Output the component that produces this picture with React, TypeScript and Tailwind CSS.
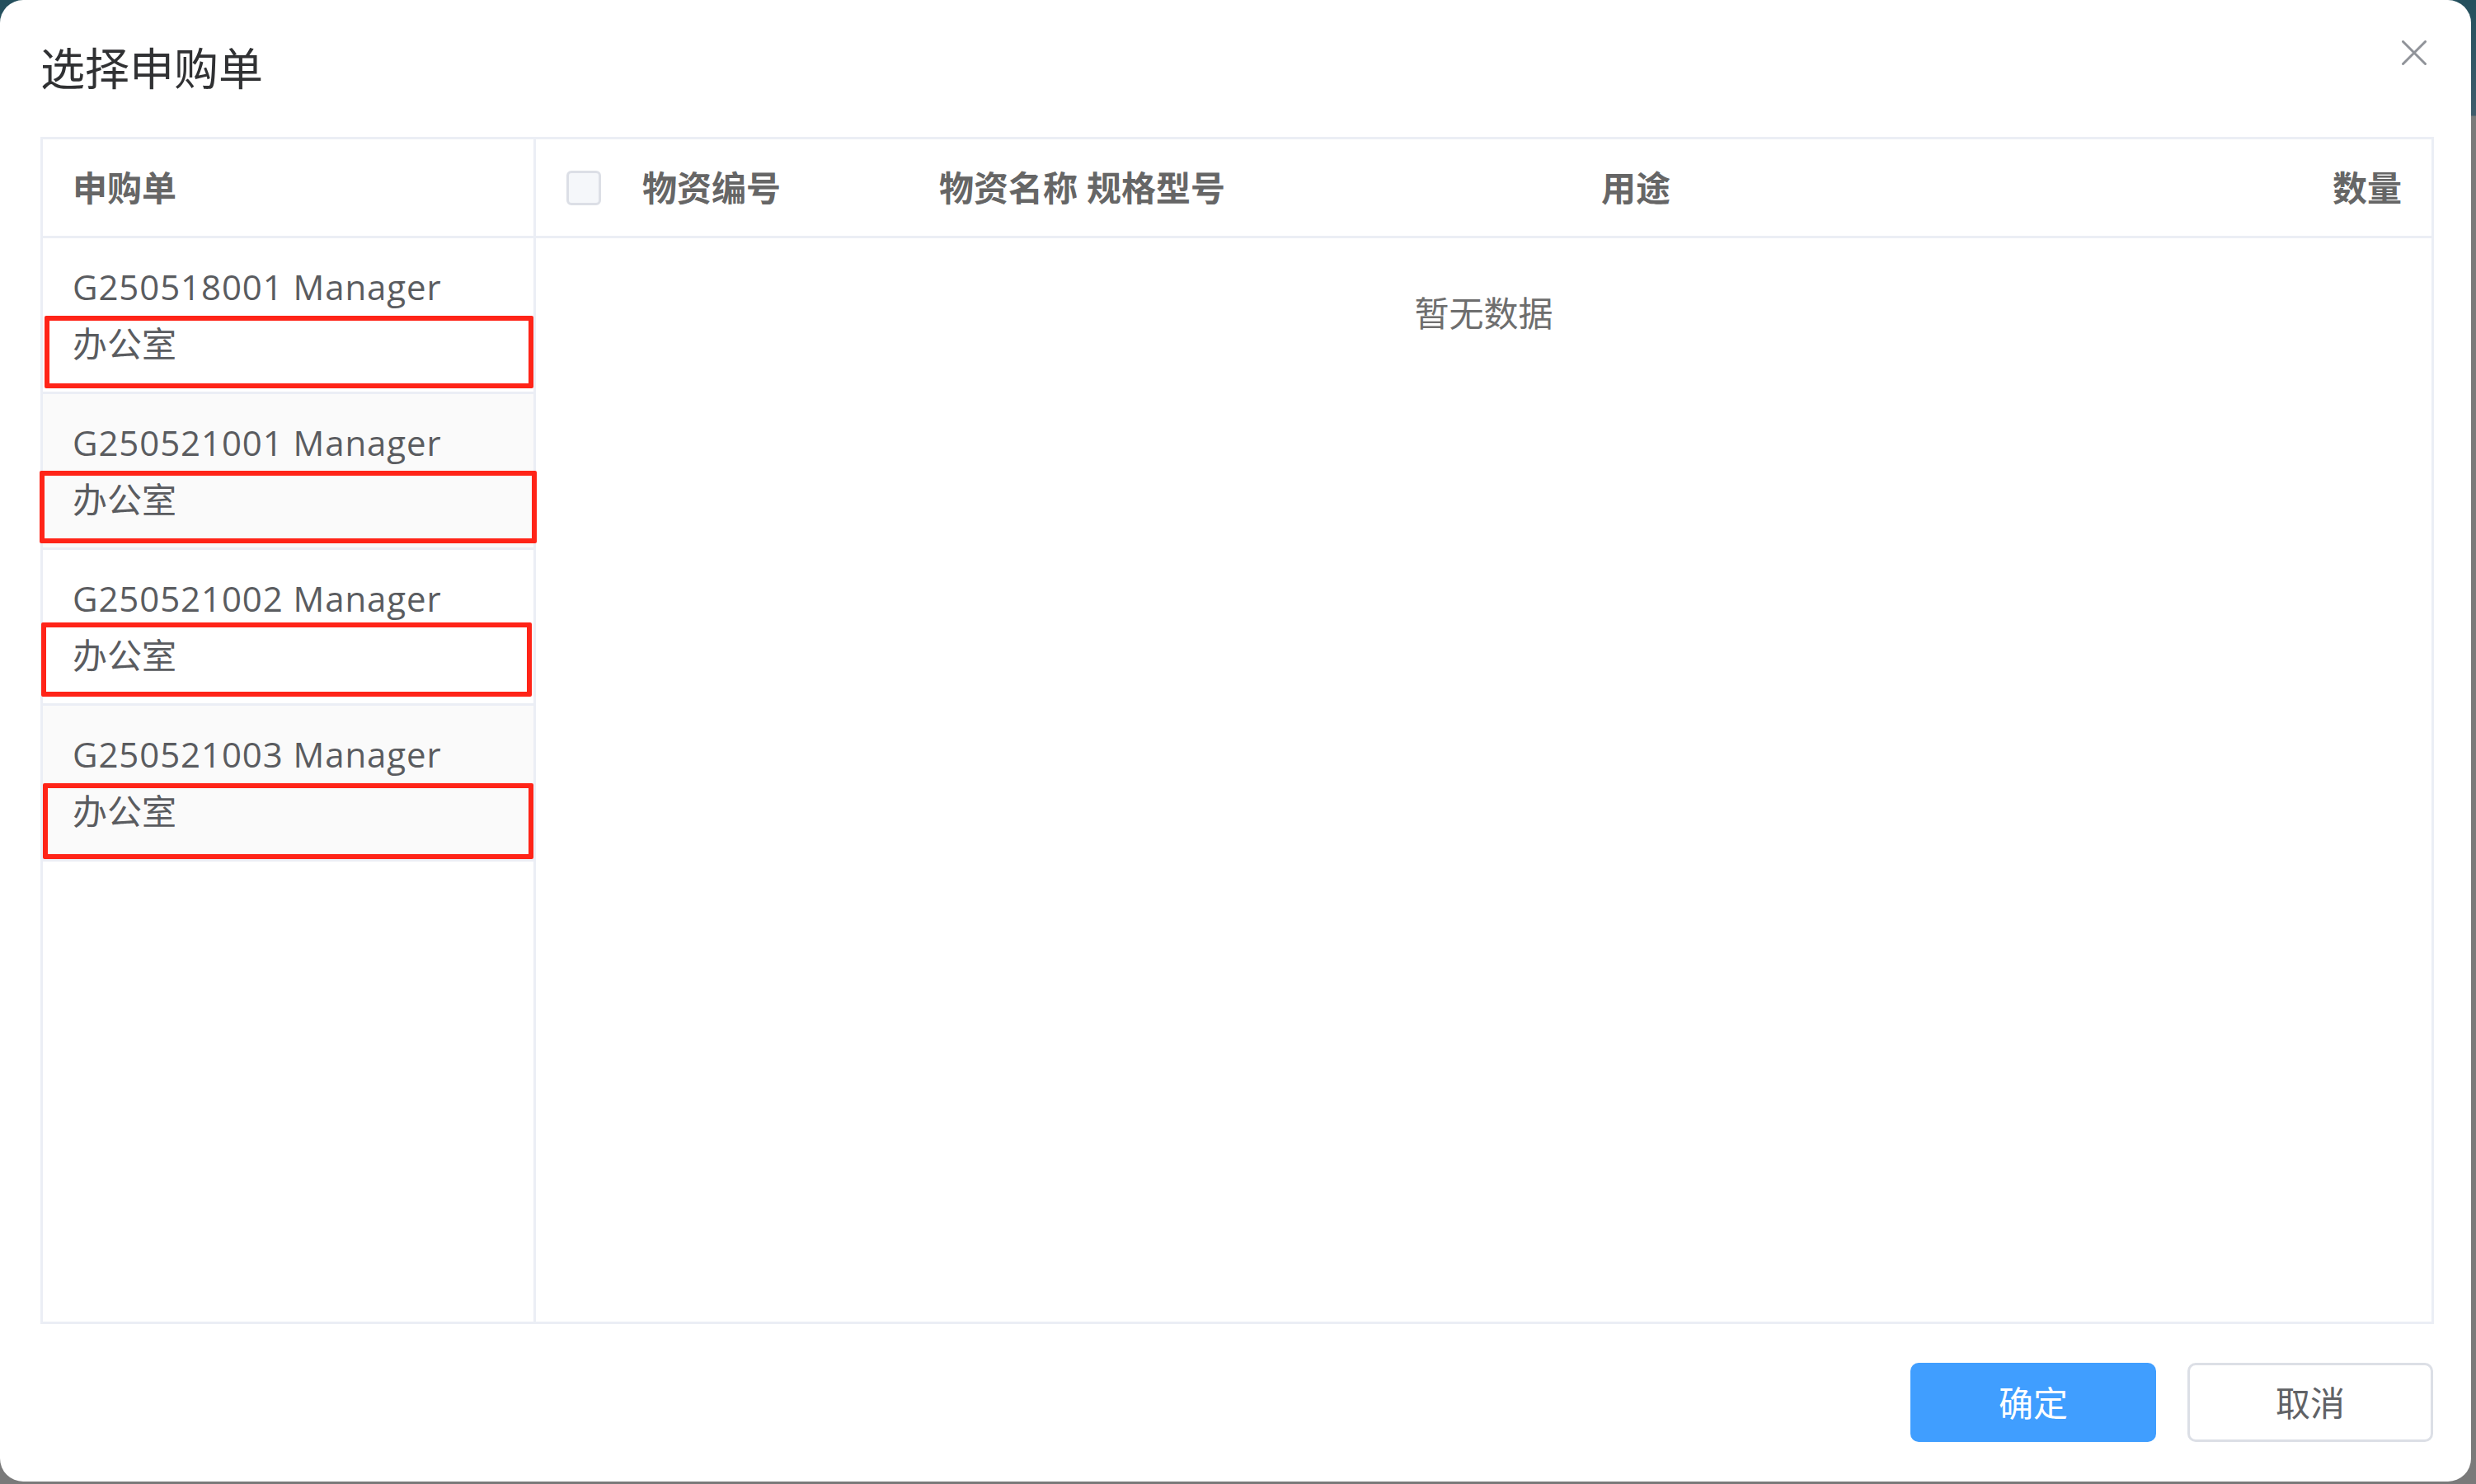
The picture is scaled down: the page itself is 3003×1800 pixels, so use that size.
import React from "react";

const requisitions = [
  { code: "G250518001", bg: "bg-white", mark: "top-[94px] left-[2px] w-[593px] h-[88px]" },
  { code: "G250521001", bg: "bg-[#fafafa]", mark: "top-[93px] left-[-4px] w-[603px] h-[88px]" },
  { code: "G250521002", bg: "bg-white", mark: "top-[88px] left-[-2px] w-[595px] h-[90px]" },
  { code: "G250521003", bg: "bg-[#fafafa]", mark: "top-[94px] left-[0px] w-[595px] h-[92px]" },
];

function CloseIcon() {
  return (
    <svg width="30" height="30" viewBox="0 0 30 30" fill="none">
      <path d="M1.5 1.5L28.5 28.5M28.5 1.5L1.5 28.5" stroke="#909399" strokeWidth="3" strokeLinecap="round" />
    </svg>
  );
}

export default function App() {
  return (
    <div className="w-[3003px] h-[1800px] overflow-hidden bg-[linear-gradient(180deg,#24505d_0px,#3f5c6c_140px,#7a7a7a_141px)] [font-family:'Open_Sans','Noto_Sans_CJK_SC',sans-serif]">
      <div className="relative w-[2997px] h-[1797px] bg-white rounded-[28px] flex flex-col pl-[49px] pr-[45px]">
        {/* Header */}
        <div className="pt-[50px] h-[116px]">
          <h1 className="text-[54px] leading-[66px] text-[#303133] font-normal">选择申购单</h1>
        </div>
        <button className="absolute top-[49px] right-[54px] w-[30px] h-[30px] flex items-center justify-center">
          <CloseIcon />
        </button>

        {/* Table */}
        <div className="mt-[50px] h-[1440px] border-[3px] border-[#ebeef5] flex">
          {/* Left: requisition list */}
          <div className="w-[598px] border-r-[3px] border-[#ebeef5] flex flex-col">
            <div className="h-[120px] border-b-[3px] border-[#ebeef5] flex items-center pl-[36px]">
              <span className="text-[42px] font-bold text-[#666666]">申购单</span>
            </div>
            {requisitions.map((r) => (
              <div key={r.code} className={`relative h-[189px] border-b-[3px] border-[#ebeef5] pl-[36px] pt-[24px] ${r.bg}`}>
                <div className="text-[42px] leading-[69px] tracking-[0.9px] text-[#5a5c60]">{r.code} Manager</div>
                <div className="text-[42px] leading-[69px] text-[#5a5c60]">办公室</div>
                <div className={`absolute border-[6px] border-[#ff2418] rounded-[2px] ${r.mark}`} />
              </div>
            ))}
          </div>

          {/* Right: items */}
          <div className="flex-1 flex flex-col">
            <div className="h-[120px] border-b-[3px] border-[#ebeef5] flex items-center pl-[37px] text-[42px] font-bold text-[#666666]">
              <span className="w-[42px] h-[42px] rounded-[6px] border-[3px] border-[#dcdfe6] bg-[#f5f7fa] shrink-0" />
              <span className="ml-[50px] w-[360px]">物资编号</span>
              <span className="w-[803px]">物资名称 规格型号</span>
              <span>用途</span>
              <span className="flex-1 text-right pr-[36px]">数量</span>
            </div>
            <div className="h-[180px] flex items-center justify-center">
              <span className="text-[42px] text-[#6e6e6e]">暂无数据</span>
            </div>
          </div>
        </div>

        {/* Footer */}
        <div className="mt-[47px] flex justify-end gap-[38px] pr-[1px]">
          <button className="w-[298px] h-[96px] rounded-[10px] bg-[#409eff] text-white text-[42px]">确定</button>
          <button className="w-[298px] h-[96px] rounded-[10px] border-[3px] border-[#dcdfe6] bg-white text-[#606266] text-[42px]">取消</button>
        </div>
      </div>
    </div>
  );
}
